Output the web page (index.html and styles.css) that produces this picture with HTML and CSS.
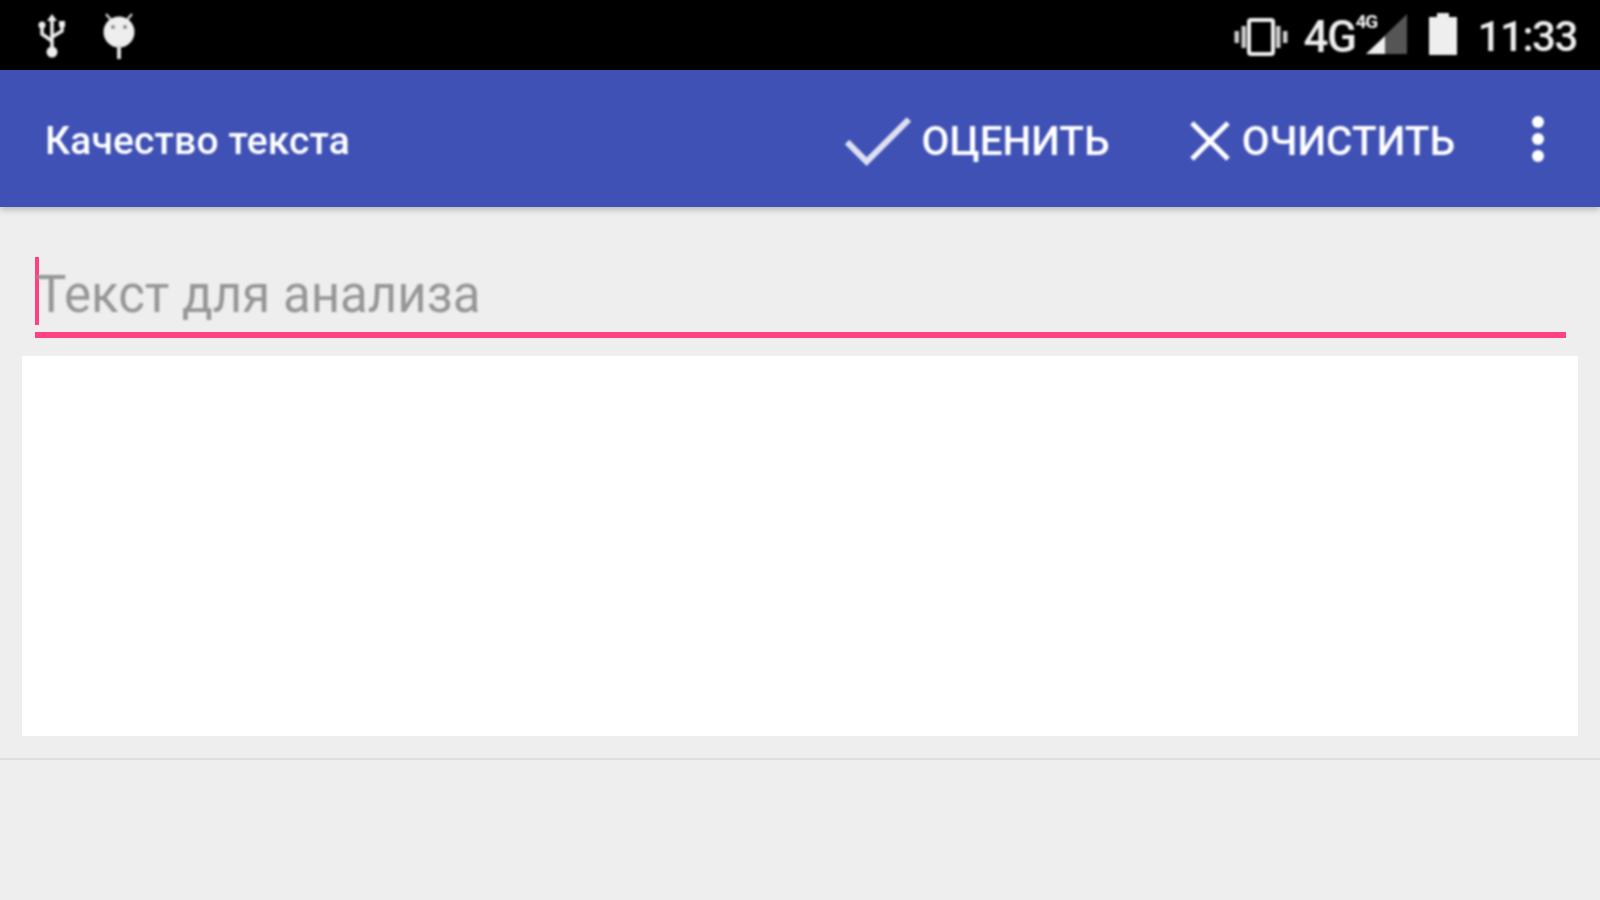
FILE: index.html
```html
<!DOCTYPE html>
<html lang="ru">
<head>
    <meta charset="UTF-8">
    <meta name="viewport" content="width=device-width, initial-scale=1.0">
    <title>Качество текста</title>
    <link rel="stylesheet" href="styles.css">
</head>
<body>
    <div class="status-bar">
        <div class="status-left">
            <svg class="icon-usb" width="30" height="44" viewBox="0 0 30 44" fill="none" stroke="#eee" stroke-width="3.5">
                <path d="M15 4V36M15 27L5 20V13M15 23L25 17V11"/>
                <path d="M15 0L20 7H10Z" fill="#eee" stroke="none"/>
                <circle cx="5" cy="11" r="3.5" fill="#eee" stroke="none"/>
                <rect x="22" y="7" width="6" height="6" fill="#eee" stroke="none"/>
                <circle cx="15" cy="38" r="5.5" fill="#eee" stroke="none"/>
            </svg>
            <svg class="icon-debug" width="32" height="46" viewBox="0 0 32 46">
                <path d="M3 1L9 8M29 1L23 8" stroke="#ccc" stroke-width="2.5" fill="none"/>
                <circle cx="16" cy="19" r="15.5" fill="#eee"/>
                <circle cx="10" cy="14" r="2" fill="#888"/>
                <circle cx="22" cy="14" r="2" fill="#888"/>
                <rect x="14" y="32" width="4" height="14" fill="#ddd"/>
            </svg>
        </div>
        <div class="status-right">
            <svg class="icon-vibrate" width="54" height="38" viewBox="0 0 54 38" fill="none">
                <rect x="15" y="2" width="24" height="34" rx="2" stroke="#eee" stroke-width="4"/>
                <rect x="7.5" y="8" width="4.5" height="22" fill="#ccc"/>
                <rect x="42" y="8" width="4.5" height="22" fill="#ccc"/>
                <rect x="0.5" y="13" width="4.5" height="12" fill="#ccc"/>
                <rect x="49" y="13" width="4.5" height="12" fill="#ccc"/>
            </svg>
            <div class="network">
                <span class="network-main">4G</span>
                <span class="network-sub">4G</span>
            </div>
            <svg class="icon-signal" width="42" height="40" viewBox="0 0 42 40">
                <path d="M41 0V40H0Z" fill="#555"/>
                <path d="M19 22V40H0Z" fill="#eee"/>
            </svg>
            <svg class="icon-battery" width="28" height="42" viewBox="0 0 28 42">
                <path d="M8 0H20V4H28V42H0V4H8Z" fill="#eee"/>
            </svg>
            <span class="clock">11:33</span>
        </div>
    </div>
    <header class="app-bar">
        <p class="app-title">Качество текста</p>
        <div class="actions">
            <button class="action action-rate">
                <svg width="68" height="52" viewBox="0 0 66 50" fill="none" stroke="#dfe1f2" stroke-width="6">
                    <path d="M3 26L22 45L63 4"/>
                </svg>
                ОЦЕНИТЬ
            </button>
            <button class="action action-clear">
                <svg width="42" height="42" viewBox="0 0 42 42" fill="none" stroke="#fff" stroke-width="5">
                    <path d="M3 3L39 39M39 3L3 39"/>
                </svg>
                ОЧИСТИТЬ
            </button>
            <div class="more">
                <span></span>
                <span></span>
                <span></span>
            </div>
        </div>
    </header>
    <main class="content">
        <div class="text-field">
            <span class="caret"></span>
            <span class="placeholder">Текст для анализа</span>
        </div>
        <div class="result"></div>
        <div class="divider"></div>
    </main>
</body>
</html>
```

FILE: styles.css
```css
html, body {
    height: 100%;
}
body {
    font-family: Roboto, "Noto Sans", sans-serif;
    margin: 0;
    padding: 0;
    background-color: #eeeeee;
    overflow: hidden;
}
.status-bar {
    height: 70px;
    box-sizing: border-box;
    background-color: #000;
    display: flex;
    justify-content: space-between;
    align-items: center;
    padding: 4px 23px 0 37px;
    color: #eee;
}
.status-left, .status-right {
    display: flex;
    align-items: center;
    filter: blur(1px);
}
.status-left {
    margin-top: -2px;
}
.icon-debug {
    margin-left: 36px;
}
.network {
    display: flex;
    align-items: flex-start;
    margin-left: 15px;
    width: 62px;
}
.network-main {
    font-size: 44px;
    line-height: 44px;
    font-weight: 500;
    letter-spacing: -1.5px;
}
.network-sub {
    font-size: 19px;
    line-height: 20px;
    font-weight: 700;
    letter-spacing: -1px;
    margin-top: -3px;
}
.icon-signal {
    margin-left: 1px;
    margin-top: -6px;
}
.icon-battery {
    margin-left: 21px;
    margin-top: -6px;
}
.clock {
    font-size: 42px;
    line-height: 44px;
    font-weight: 500;
    margin-left: 20px;
    letter-spacing: -1.4px;
}
.app-bar {
    height: 137px;
    box-sizing: border-box;
    background-color: #3f51b5;
    display: flex;
    justify-content: space-between;
    align-items: center;
    padding: 4px 0 0 45px;
    color: #fff;
    box-shadow: 0 3px 6px rgba(0, 0, 0, 0.22);
    position: relative;
}
.app-title {
    margin: 0;
    font-size: 39px;
    font-weight: 500;
    letter-spacing: 0.15px;
    filter: blur(0.8px);
}
.actions {
    display: flex;
    align-items: center;
    filter: blur(0.8px);
}
.action {
    display: flex;
    align-items: center;
    background: none;
    border: none;
    padding: 0;
    color: #fff;
    font-family: inherit;
    font-size: 40.5px;
    font-weight: 500;
}
.action-rate svg {
    margin-right: 10px;
}
.action-clear {
    margin-left: 79px;
}
.action-clear svg {
    margin-right: 11px;
}
.more {
    display: flex;
    flex-direction: column;
    gap: 5px;
    margin: -4px 56px 0 77px;
}
.more span {
    display: block;
    width: 12px;
    height: 12px;
    border-radius: 50%;
    background-color: #fff;
}
.content {
    padding: 50px 22px 0;
}
.text-field {
    display: flex;
    align-items: center;
    height: 75px;
    margin: 0 12px 0 13px;
    border-bottom: 6px solid #ff4081;
    position: relative;
}
.caret {
    position: absolute;
    left: 0;
    top: 0;
    width: 4px;
    height: 68px;
    background-color: #ff4081;
}
.placeholder {
    font-size: 51px;
    color: #969696;
    padding-left: 1px;
    filter: blur(0.8px);
}
.result {
    height: 380px;
    margin-top: 18px;
    background-color: #fff;
}
.divider {
    height: 2px;
    margin: 22px -22px 0;
    background-color: #dedede;
}
```
